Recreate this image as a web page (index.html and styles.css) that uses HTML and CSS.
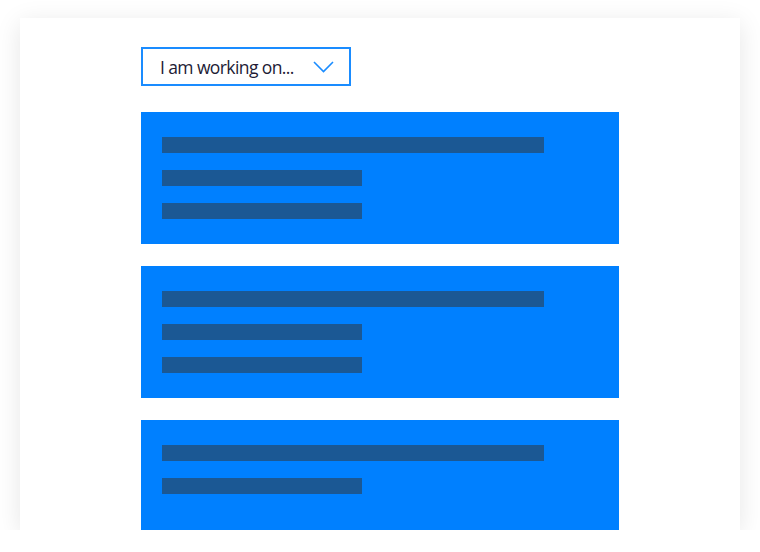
FILE: index.html
```html
<!DOCTYPE html>
<html>

<head>
    <title>I am working on</title>
    <link rel="stylesheet" href="styles.css">
</head>

<body>
    <div class="panel">
        <div class="select-box">
            <span class="select-text">I am working on...</span>
            <svg class="select-arrow" width="21" height="12" viewBox="0 0 21 12">
                <polyline points="1,1 10.5,10.5 20,1" fill="none" stroke="#1a8cff" stroke-width="1.6" />
            </svg>
        </div>
        <div class="card-list">
            <div class="card">
                <div class="bar bar-long"></div>
                <div class="bar bar-short"></div>
                <div class="bar bar-short"></div>
            </div>
            <div class="card">
                <div class="bar bar-long"></div>
                <div class="bar bar-short"></div>
                <div class="bar bar-short"></div>
            </div>
            <div class="card">
                <div class="bar bar-long"></div>
                <div class="bar bar-short"></div>
            </div>
        </div>
    </div>
</body>

</html>
```

FILE: styles.css
```css
html, body{
    margin: 0;
    padding: 0;
    background: #fff;
    overflow: hidden;
}
.panel{
    width: 720px;
    height: 512px;
    margin: 18px 0 0 20px;
    box-sizing: border-box;
    padding: 29px 0 0 121px;
    background: #fff;
    box-shadow: 0 5px 24px rgba(0, 0, 0, 0.1);
    overflow: hidden;
}
.select-box{
    width: 210px;
    height: 39px;
    box-sizing: border-box;
    border: 2px solid #1a8cff;
    display: flex;
    align-items: center;
    justify-content: space-between;
    padding: 0 15px 0 17px;
}
.select-text{
    font-family: "Open Sans", "Liberation Sans", sans-serif;
    font-size: 17.5px;
    letter-spacing: -0.6px;
    color: #221b35;
}
.select-arrow{
    display: block;
    margin-top: 1px;
}
.card-list{
    display: flex;
    flex-direction: column;
    gap: 22px;
    margin-top: 26px;
}
.card{
    width: 478px;
    height: 132px;
    box-sizing: border-box;
    flex-shrink: 0;
    background: #0080ff;
    padding: 25px 0 0 21px;
    display: flex;
    flex-direction: column;
    gap: 17px;
}
.bar{
    height: 16px;
    background: #1b5894;
}
.bar-long{
    width: 382px;
}
.bar-short{
    width: 200px;
}
```
